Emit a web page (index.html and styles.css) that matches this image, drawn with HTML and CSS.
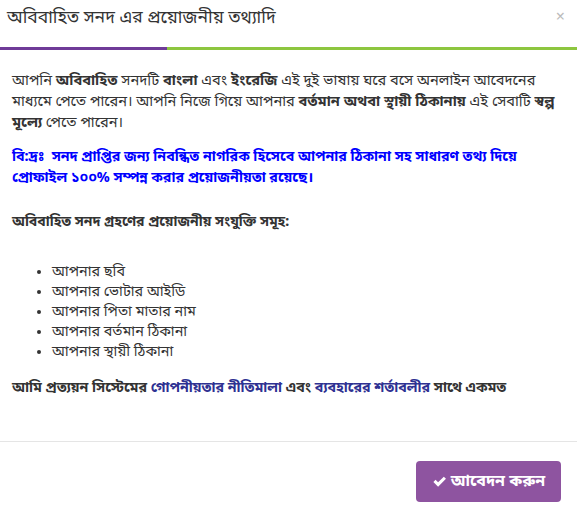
FILE: index.html
```html
<!DOCTYPE html>
<html lang="bn">
<head>
<meta charset="utf-8">
<title>অবিবাহিত সনদ</title>
<link rel="stylesheet" href="styles.css">
</head>
<body>
<div class="modal">
  <div class="modal-header">
    <h4 class="modal-title">অবিবাহিত সনদ এর প্রয়োজনীয় তথ্যাদি</h4>
    <span class="close">&times;</span>
  </div>
  <div class="header-bar"><span class="bar-purple"></span><span class="bar-green"></span></div>
  <div class="modal-body">
    <p class="intro">আপনি <b>অবিবাহিত</b> সনদটি <b>বাংলা</b> এবং <b>ইংরেজি</b> এই দুই ভাষায় ঘরে বসে অনলাইন আবেদনের মাধ্যমে পেতে পারেন। আপনি নিজে গিয়ে আপনার <b>বর্তমান অথবা স্থায়ী ঠিকানায়</b> এই সেবাটি <b>স্বল্প মূল্যে</b> পেতে পারেন।</p>
    <p class="note">বি:দ্রঃ&nbsp; সনদ প্রাপ্তির জন্য নিবন্ধিত নাগরিক হিসেবে আপনার ঠিকানা সহ সাধারণ তথ্য দিয়ে প্রোফাইল ১০০% সম্পন্ন করার প্রয়োজনীয়তা রয়েছে।</p>
    <p class="heading">অবিবাহিত সনদ গ্রহণের প্রয়োজনীয় সংযুক্তি সমূহ:</p>
    <ul class="docs">
      <li>আপনার ছবি</li>
      <li>আপনার ভোটার আইডি</li>
      <li>আপনার পিতা মাতার নাম</li>
      <li>আপনার বর্তমান ঠিকানা</li>
      <li>আপনার স্থায়ী ঠিকানা</li>
    </ul>
    <p class="agree">আমি প্রত্যয়ন সিস্টেমের <a href="#">গোপনীয়তার নীতিমালা</a> এবং <a href="#">ব্যবহারের শর্তাবলীর</a> সাথে একমত</p>
  </div>
  <div class="modal-footer">
    <button class="btn-apply"><svg class="check" viewBox="0 0 16 16" width="15" height="15"><path d="M1.5 8.5 L3.8 6.2 L6.5 8.9 L12.6 2.8 L14.9 5.1 L6.5 13.5 Z" fill="#fff"/></svg>আবেদন করুন</button>
  </div>
</div>
</body>
</html>
```
FILE: styles.css
```css
* { box-sizing: border-box; }
html, body { margin: 0; padding: 0; background: #fff; }
body {
  width: 577px;
  height: 516px;
  overflow: hidden;
  font-family: "Noto Sans Bengali", "Lohit Bengali", "Noto Sans", "DejaVu Sans", sans-serif;
  color: #333;
}
.modal { width: 577px; }
.modal-header {
  display: flex;
  justify-content: space-between;
  align-items: flex-start;
  padding: 7px 7px 0 7px;
  height: 47px;
}
.modal-title {
  margin: 0;
  font-size: 17.5px;
  font-weight: normal;
  line-height: 24px;
  color: #333;
}
.close {
  color: #bbb;
  font-size: 16px;
  line-height: 18px;
  margin-top: 2px;
  margin-right: 5px;
}
.header-bar { display: flex; height: 3px; }
.bar-purple { width: 167px; background: #6f3b98; }
.bar-green { flex: 1; background: #8dc63f; }
.modal-body {
  padding: 21px 12px 0 12px;
  font-size: 14px;
  line-height: 21px;
  height: 392px;
  border-bottom: 1px solid #e5e5e5;
}
.modal-body p { margin: 0; }
.modal-body .intro { font-size: 14.6px; margin-bottom: 13px; }
.modal-body .note { color: #0000ff; font-weight: bold; font-size: 14.2px; margin-bottom: 23px; }
.heading { font-weight: bold; }
.docs { margin: 30px 0 15px 0; padding-left: 40px; line-height: 20px; font-size: 14.4px; }
.agree { font-weight: bold; font-size: 14.2px; }
.agree a { color: #2e3192; text-decoration: none; }
.modal-footer {
  display: flex;
  justify-content: flex-end;
  padding: 19px 16px 0 0;
}
.btn-apply {
  display: flex;
  align-items: center;
  gap: 4px;
  background: #8e54a0;
  color: #fff;
  border: none;
  border-radius: 4px;
  height: 41px;
  width: 145px;
  justify-content: center;
  font-family: inherit;
  font-size: 16px;
  font-weight: bold;
}
```
